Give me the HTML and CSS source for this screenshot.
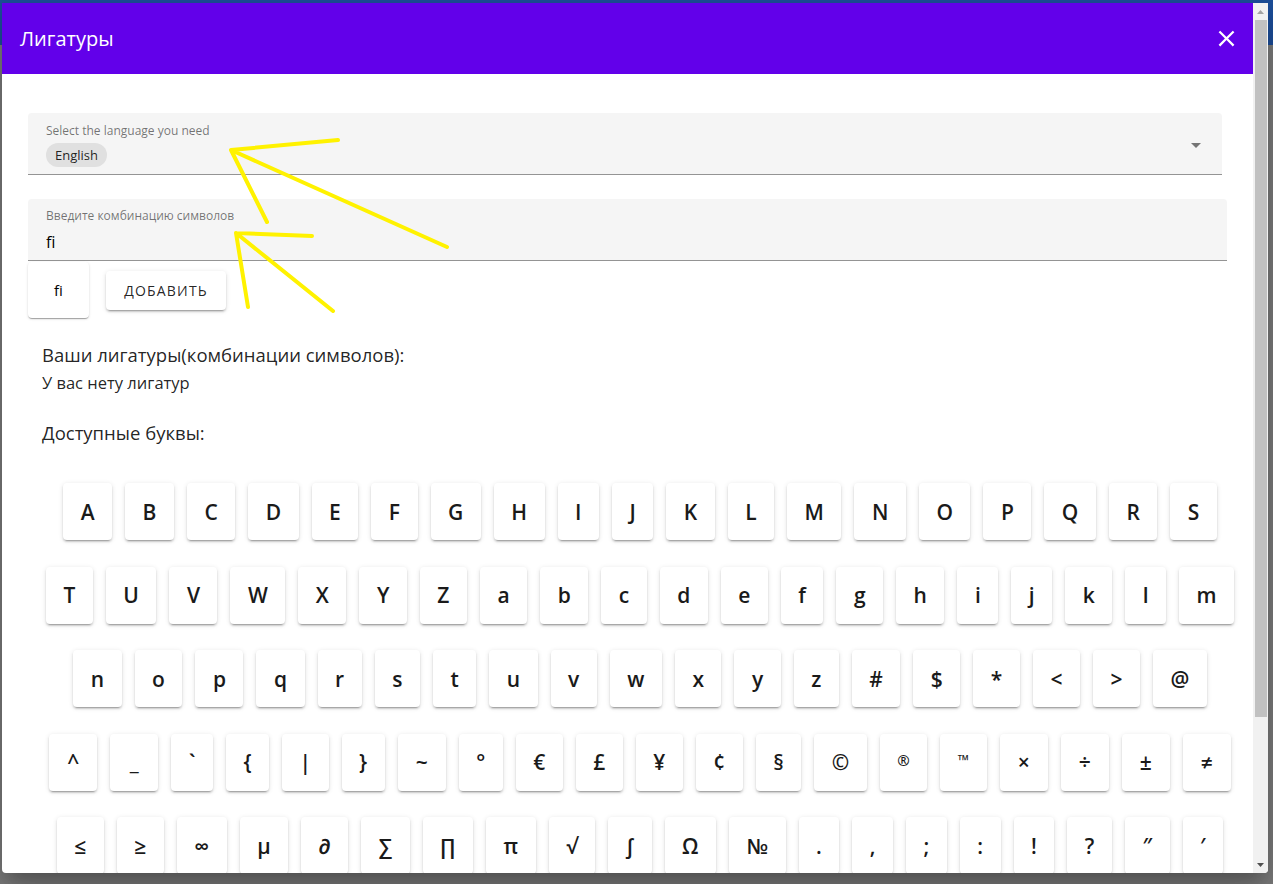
FILE: index.html
```html
<!DOCTYPE html>
<html lang="ru">
<head>
    <meta charset="UTF-8">
    <meta name="viewport" content="width=device-width, initial-scale=1.0">
    <title>Лигатуры</title>
    <link rel="stylesheet" href="styles.css">
</head>
<body>
    <div class="backdrop">
        <div class="dialog">
            <div class="dialog-body">
                <header class="dialog-title">
                    <h2>Лигатуры</h2>
                    <button class="close-button" aria-label="Закрыть">
                        <svg viewBox="0 0 24 24" width="27" height="27"><path d="M19 6.41L17.59 5 12 10.59 6.41 5 5 6.41 10.59 12 5 17.59 6.41 19 12 13.41 17.59 19 19 17.59 13.41 12z" fill="#fff"/></svg>
                    </button>
                </header>

                <div class="dialog-content">
                    <div class="select-field">
                        <div class="select-main">
                            <label class="field-label">Select the language you need</label>
                            <div class="select-value"><span class="chip">English</span></div>
                        </div>
                        <svg class="select-arrow" viewBox="0 0 24 24" width="24" height="24"><path d="M7 10l5 5 5-5z" fill="#757575"/></svg>
                    </div>

                    <div class="text-field">
                        <label for="combo" class="field-label">Введите комбинацию символов</label>
                        <input id="combo" class="text-input" type="text" value="fi">
                    </div>

                    <div class="preview-row">
                        <div class="preview-card">fi</div>
                        <button class="add-button">Добавить</button>
                    </div>

                    <p class="section-title">Ваши лигатуры(комбинации символов):</p>
                    <p class="empty-note">У вас нету лигатур</p>
                    <p class="section-title letters-title">Доступные буквы:</p>

                    <div class="keyboard">
                        <div class="key-row">
                            <span class="key">A</span><span class="key">B</span><span class="key">C</span><span class="key">D</span><span class="key">E</span><span class="key">F</span><span class="key">G</span><span class="key">H</span><span class="key">I</span><span class="key">J</span><span class="key">K</span><span class="key">L</span><span class="key">M</span><span class="key">N</span><span class="key">O</span><span class="key">P</span><span class="key">Q</span><span class="key">R</span><span class="key">S</span>
                        </div>
                        <div class="key-row">
                            <span class="key">T</span><span class="key">U</span><span class="key">V</span><span class="key">W</span><span class="key">X</span><span class="key">Y</span><span class="key">Z</span><span class="key">a</span><span class="key">b</span><span class="key">c</span><span class="key">d</span><span class="key">e</span><span class="key">f</span><span class="key">g</span><span class="key">h</span><span class="key">i</span><span class="key">j</span><span class="key">k</span><span class="key">l</span><span class="key">m</span>
                        </div>
                        <div class="key-row">
                            <span class="key">n</span><span class="key">o</span><span class="key">p</span><span class="key">q</span><span class="key">r</span><span class="key">s</span><span class="key">t</span><span class="key">u</span><span class="key">v</span><span class="key">w</span><span class="key">x</span><span class="key">y</span><span class="key">z</span><span class="key">#</span><span class="key">$</span><span class="key">*</span><span class="key">&lt;</span><span class="key">&gt;</span><span class="key">@</span>
                        </div>
                        <div class="key-row">
                            <span class="key wide">^</span><span class="key wide">_</span><span class="key">`</span><span class="key">{</span><span class="key">|</span><span class="key">}</span><span class="key wide">~</span><span class="key">°</span><span class="key">€</span><span class="key">£</span><span class="key">¥</span><span class="key">¢</span><span class="key">§</span><span class="key">©</span><span class="key small">®</span><span class="key small">™</span><span class="key wide">×</span><span class="key wide">÷</span><span class="key wide">±</span><span class="key wide">≠</span>
                        </div>
                        <div class="key-row">
                            <span class="key">≤</span><span class="key">≥</span><span class="key">∞</span><span class="key">µ</span><span class="key">∂</span><span class="key">∑</span><span class="key">∏</span><span class="key">π</span><span class="key">√</span><span class="key">∫</span><span class="key">Ω</span><span class="key">№</span><span class="key">.</span><span class="key">,</span><span class="key">;</span><span class="key">:</span><span class="key">!</span><span class="key">?</span><span class="key">″</span><span class="key">′</span>
                        </div>
                    </div>
                </div>
            </div>

            <div class="scrollbar">
                <div class="scroll-button"><svg viewBox="0 0 15 17" width="15" height="17"><path d="M4 11h7l-3.5-4z" fill="#a3a3a3"/></svg></div>
                <div class="scroll-thumb"></div>
                <div class="scroll-track"></div>
                <div class="scroll-button"><svg viewBox="0 0 15 17" width="15" height="17"><path d="M4 7h7l-3.5 4z" fill="#505050"/></svg></div>
            </div>
        </div>
    </div>

    <!-- yellow marker arrows drawn on top of the screenshot -->
    <svg class="annotations" width="1273" height="884" viewBox="0 0 1273 884">
        <g fill="none" stroke="#fff200" stroke-width="4" stroke-linecap="round" stroke-linejoin="round">
            <path d="M338 140 L231 150 L447 247 M231 150 L267 222"/>
            <path d="M312 236 L236 233 L333 311 M236 233 L248 307"/>
        </g>
    </svg>
</body>
</html>
```

FILE: styles.css
```css
body {
    margin: 0;
    height: 884px;
    overflow: hidden;
    position: relative;
    font-family: "Open Sans", "Noto Sans", "DejaVu Sans", sans-serif;
    color: rgba(0, 0, 0, 0.87);
    background: linear-gradient(#1d4f9c 0, #1d4f9c 45px, #7e7e7e 45px);
}
.backdrop {
    padding: 3px 5px 0 2px;
}
.dialog {
    display: flex;
    width: 1266px;
    height: 870px;
    background: #fff;
    border-radius: 0 0 4px 4px;
    overflow: hidden;
    box-shadow: 0 11px 15px -7px rgba(0, 0, 0, 0.2), 0 24px 38px 3px rgba(0, 0, 0, 0.14), 0 9px 46px 8px rgba(0, 0, 0, 0.12);
}
.dialog-body {
    flex: 1;
    min-width: 0;
    overflow: hidden;
}
.scrollbar {
    width: 15px;
    flex: none;
    display: flex;
    flex-direction: column;
    background-color: #f1f1f1;
}
.scroll-button {
    height: 17px;
    display: flex;
}
.scroll-thumb {
    height: 697px;
    margin: 0 1px 0 2px;
    background-color: #c1c1c1;
}
.scroll-track {
    flex: 1;
}
.dialog-title {
    height: 71px;
    background-color: #6200ea;
    color: #fff;
    display: flex;
    align-items: center;
    justify-content: space-between;
    padding: 0 13px 0 18px;
    box-sizing: border-box;
}
.dialog-title h2 {
    margin: 0;
    font-size: 20px;
    font-weight: 500;
}
.close-button {
    background: none;
    border: none;
    padding: 0;
    display: flex;
    cursor: pointer;
}
.dialog-content {
    padding: 39px 26px 0 26px;
}
.select-field {
    display: flex;
    align-items: center;
    height: 61px;
    margin-right: 5px;
    background-color: #f5f5f5;
    border-bottom: 1px solid #949494;
    border-radius: 4px 4px 0 0;
}
.select-main {
    flex: 1;
    padding: 10px 18px 0 18px;
    align-self: stretch;
}
.select-arrow {
    margin: 2px 14px 0 0;
}
.field-label {
    display: block;
    font-size: 12px;
    line-height: 16px;
    color: rgba(0, 0, 0, 0.54);
}
.select-value {
    margin-top: 4px;
}
.chip {
    display: inline-block;
    height: 24px;
    line-height: 24px;
    padding: 0 9px;
    border-radius: 12px;
    background-color: #e0e0e0;
    font-size: 13px;
    color: rgba(0, 0, 0, 0.87);
}
.text-field {
    margin-top: 24px;
    padding: 9px 18px 9px 18px;
    background-color: #f5f5f5;
    border-bottom: 1px solid #949494;
    border-radius: 4px 4px 0 0;
}
.text-input {
    display: block;
    width: 100%;
    margin-top: 8px;
    padding: 0;
    height: 19px;
    border: none;
    background: transparent;
    font-family: inherit;
    font-size: 16px;
    color: #000;
    outline: none;
}
.preview-row {
    display: flex;
    align-items: center;
    gap: 17px;
    margin-top: 1px;
}
.preview-card {
    width: 61px;
    height: 56px;
    display: flex;
    align-items: center;
    justify-content: center;
    font-size: 15px;
    color: #000;
    border-radius: 4px;
    background: #fff;
    box-shadow: 0 2px 1px -1px rgba(0, 0, 0, 0.2), 0 1px 1px 0 rgba(0, 0, 0, 0.14), 0 1px 3px 0 rgba(0, 0, 0, 0.12);
}
.add-button {
    width: 120px;
    height: 39px;
    border: none;
    border-radius: 4px;
    background: #fff;
    font-family: inherit;
    font-size: 14px;
    font-weight: 500;
    letter-spacing: 1.2px;
    text-transform: uppercase;
    color: rgba(0, 0, 0, 0.87);
    cursor: pointer;
    box-shadow: 0 3px 1px -2px rgba(0, 0, 0, 0.2), 0 2px 2px 0 rgba(0, 0, 0, 0.14), 0 1px 5px 0 rgba(0, 0, 0, 0.12);
}
.section-title {
    margin: 25px 0 0 14px;
    font-size: 18.5px;
    line-height: 24px;
}
.empty-note {
    margin: 5px 0 0 14px;
    font-size: 16.5px;
    line-height: 22px;
}
.letters-title {
    margin-top: 27px;
}
.keyboard {
    margin: 38px -25px 0 0;
    display: flex;
    flex-direction: column;
    gap: 26.5px;
}
.key-row {
    display: flex;
    justify-content: center;
    gap: 13px;
}
.key {
    height: 57px;
    padding: 0 17.5px;
    min-width: 40px;
    box-sizing: border-box;
    display: flex;
    align-items: center;
    justify-content: center;
    font-size: 21px;
    font-weight: 600;
    color: #1a1a1a;
    border-radius: 4px;
    background: #fff;
    box-shadow: 0 3px 1px -2px rgba(0, 0, 0, 0.2), 0 2px 2px 0 rgba(0, 0, 0, 0.14), 0 1px 5px 0 rgba(0, 0, 0, 0.12);
}
.key.wide {
    min-width: 48px;
}
.key.small {
    font-size: 15px;
    align-items: flex-start;
    padding-top: 16px;
}
.annotations {
    position: absolute;
    left: 0;
    top: 0;
    pointer-events: none;
}
```
